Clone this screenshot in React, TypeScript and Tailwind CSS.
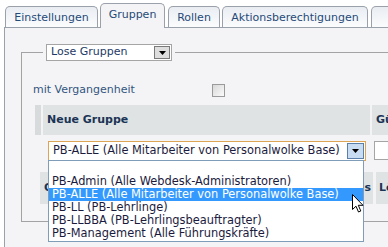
import React from "react";

const font = { fontFamily: '"DejaVu Sans", Verdana, sans-serif' };

function Tab({ label, w, active }: { label: string; w: number; active?: boolean }) {
  return (
    <div
      className={
        active
          ? "relative z-10 -mb-px h-[25px] shrink-0 rounded-t-[5px] border border-b-0 border-[#9aa1aa] bg-[#f4f4f6] pt-[3px] text-center text-[11px] text-[#264a78]"
          : "h-[21px] shrink-0 rounded-t-[5px] border border-b-0 border-[#9aa1aa] bg-gradient-to-b from-[#e9edf2] to-[#fbfcfd] pt-[3px] text-center text-[11px] text-[#264a78]"
      }
      style={{ width: w }}
    >
      <span className="whitespace-nowrap">{label}</span>
    </div>
  );
}

function Arrow() {
  return (
    <svg width="7" height="4" viewBox="0 0 7 4">
      <path d="M0 0H7L3.5 4Z" fill="#000" />
    </svg>
  );
}

export default function App() {
  const options = [
    "",
    "PB-Admin (Alle Webdesk-Administratoren)",
    "PB-ALLE (Alle Mitarbeiter von Personalwolke Base)",
    "PB-LL (PB-Lehrlinge)",
    "PB-LLBBA (PB-Lehrlingsbeauftragter)",
    "PB-Management (Alle Führungskräfte)",
  ];
  return (
    <div className="relative h-[247px] w-[388px] overflow-hidden bg-white" style={font}>
      {/* tabs */}
      <div className="flex h-[27px] w-[460px] items-end pl-[5px]">
        <Tab label="Einstellungen" w={93} />
        <div className="w-[2px] shrink-0" />
        <Tab label="Gruppen" w={65} active />
        <div className="w-[3px] shrink-0" />
        <Tab label="Rollen" w={52} />
        <div className="w-[2px] shrink-0" />
        <Tab label="Aktionsberechtigungen" w={146} />
        <div className="w-[3px] shrink-0" />
        <Tab label="Infos" w={60} />
      </div>
      {/* panel */}
      <div className="ml-[4px] h-[220px] w-[450px] border-l border-t border-[#9aa1aa] bg-[#f4f4f6] pl-[16px] pt-[16px]">
        <fieldset className="h-[178px] w-[440px] border border-[#a3a3a3] pl-[11px]">
          <legend className="ml-[10px] px-[3px]">
            <div className="flex h-[17px] w-[126px] items-center border border-[#a5a5a5] bg-white pl-[4px] text-[11px] text-[#1d3a66]">
              <span className="flex-1 whitespace-nowrap">Lose Gruppen</span>
              <div className="mr-[1px] flex h-[13px] w-[16px] items-center justify-center border border-[#7a7a7a] bg-[#dedede]">
                <Arrow />
              </div>
            </div>
          </legend>
          <div className="mt-[23px] flex h-[13px] items-center">
            <span className="w-[179px] text-[11px] text-[#33557f]">mit Vergangenheit</span>
            <div className="h-[13px] w-[13px] border border-[#9a9a9a] bg-gradient-to-br from-[#d8d8d8] to-[#fbfbfb]" />
          </div>
          {/* table */}
          <div className="ml-[2px] mt-[8px]">
            <div className="flex h-[30px] gap-[2px]">
              <div className="w-[6px] bg-[#d7dbdc]" />
              <div className="flex w-[327px] items-center bg-[#dfe3e4] pl-[4px] text-[11px] font-bold text-[#1b3354]">
                Neue Gruppe
              </div>
              <div className="flex w-[80px] items-center bg-[#dfe3e4] pl-[4px] text-[11px] font-bold text-[#1b3354]">
                Gültig von
              </div>
            </div>
            <div className="flex h-[37px] items-start gap-[2px] pt-[6px]">
              <div className="w-[6px]" />
              <div className="w-[327px] pl-[5px]">
                <div className="flex h-[20px] w-[318px] items-center border border-[#dba555] bg-white pl-[4px] text-[11.4px] text-[#1b1b3e]">
                  <span className="flex-1 whitespace-nowrap">PB-ALLE (Alle Mitarbeiter von Personalwolke Base)</span>
                  <div className="mr-[1px] flex h-[16px] w-[17px] items-center justify-center border border-[#5a7fa8] bg-[#c9ddf2]">
                    <Arrow />
                  </div>
                </div>
              </div>
              <div className="w-[80px] pl-[2px]">
                <div className="h-[19px] w-[60px] border border-[#a5a5a5] bg-white" />
              </div>
            </div>
            <div className="flex h-[32px] gap-[3px] pl-[5px]">
              <div className="flex w-[333px] items-center bg-[#dfe3e4] pl-[4px] text-[11px] font-bold text-[#1b3354]">
                Gruppe
                <span className="ml-auto pr-[2px]">Gültig bis</span>
              </div>
              <div className="flex w-[80px] items-center bg-[#dfe3e4] pl-[3px] text-[11px] font-bold text-[#1b3354]">
                Löschen
              </div>
            </div>
          </div>
        </fieldset>
      </div>
      {/* dropdown list overlay */}
      <div className="absolute left-[48px] top-[160px] w-[316px] border border-[#7f9db9] bg-white py-[1px]">
        {options.map((o, i) => (
          <div
            key={i}
            className={
              "h-[13px] whitespace-nowrap pl-[3px] text-[11.4px] leading-[13px] " +
              (i === 2 ? "bg-[#3399ff] text-white" : "text-[#1b1b3e]")
            }
          >
            {o}
          </div>
        ))}
      </div>
      {/* cursor */}
      <svg className="absolute left-[352px] top-[194px]" width="12" height="19" viewBox="0 0 12 19">
        <path d="M0.5 0.5V15.5L4 12.2L6.5 18L8.8 17L6.3 11.3H11Z" fill="#fff" stroke="#000" strokeWidth="1" />
      </svg>
    </div>
  );
}
